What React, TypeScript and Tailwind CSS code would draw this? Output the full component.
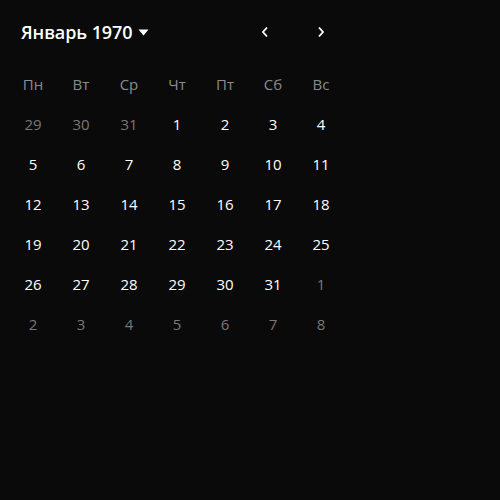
import { useState } from "react";

const WEEKDAYS = ["Пн", "Вт", "Ср", "Чт", "Пт", "Сб", "Вс"];
const MONTHS = [
  "Январь", "Февраль", "Март", "Апрель", "Май", "Июнь",
  "Июль", "Август", "Сентябрь", "Октябрь", "Ноябрь", "Декабрь",
];

function buildDays(year: number, month: number) {
  const first = new Date(year, month, 1);
  const offset = (first.getDay() + 6) % 7;
  const start = new Date(year, month, 1 - offset);
  const days: { date: number; inMonth: boolean }[] = [];
  for (let i = 0; i < 42; i++) {
    const d = new Date(start.getFullYear(), start.getMonth(), start.getDate() + i);
    days.push({ date: d.getDate(), inMonth: d.getMonth() === month });
  }
  return days;
}

export default function App() {
  const [view, setView] = useState({ year: 1970, month: 0 });
  const days = buildDays(view.year, view.month);

  const shift = (delta: number) => {
    const m = view.month + delta;
    setView({ year: view.year + Math.floor(m / 12), month: ((m % 12) + 12) % 12 });
  };

  return (
    <div
      className="w-[500px] h-[500px] bg-[#0a0a0a] text-white"
      style={{ fontFamily: '"Open Sans", "Noto Sans", sans-serif' }}
    >
      <div className="w-[336px] ml-[9px] pt-[18px]">
        {/* Header */}
        <div className="flex items-center h-[28px]">
          <button className="flex items-center gap-[6px] ml-[12px] text-[18px] font-semibold tracking-[-0.1px] text-white">
            {MONTHS[view.month]} {view.year}
            <svg width="11" height="7" viewBox="0 0 11 7">
              <path d="M0.5 0.5 H10.5 L5.5 6.5 Z" fill="white" />
            </svg>
          </button>
          <div className="ml-auto flex items-center">
            <button
              className="w-[48px] h-[28px] mr-[8px] flex items-center justify-center"
              onClick={() => shift(-1)}
            >
              <svg width="8" height="12" viewBox="0 0 8 12">
                <path d="M6 1.5 L2 6 L6 10.5" stroke="white" strokeWidth="1.8" fill="none" />
              </svg>
            </button>
            <button
              className="w-[48px] h-[28px] flex items-center justify-center"
              onClick={() => shift(1)}
            >
              <svg width="8" height="12" viewBox="0 0 8 12">
                <path d="M2 1.5 L6 6 L2 10.5" stroke="white" strokeWidth="1.8" fill="none" />
              </svg>
            </button>
          </div>
        </div>

        {/* Weekdays */}
        <div className="grid grid-cols-7 mt-[18px]">
          {WEEKDAYS.map((w) => (
            <div key={w} className="h-[40px] flex items-center justify-center text-[15px] text-[#8c8c8c]">
              {w}
            </div>
          ))}
        </div>

        {/* Days */}
        <div className="grid grid-cols-7">
          {days.map((d, i) => (
            <button
              key={i}
              className={
                "h-[40px] flex items-center justify-center text-[15px] " +
                (d.inMonth ? "text-white" : "text-[#787878]")
              }
            >
              {d.date}
            </button>
          ))}
        </div>
      </div>
    </div>
  );
}
